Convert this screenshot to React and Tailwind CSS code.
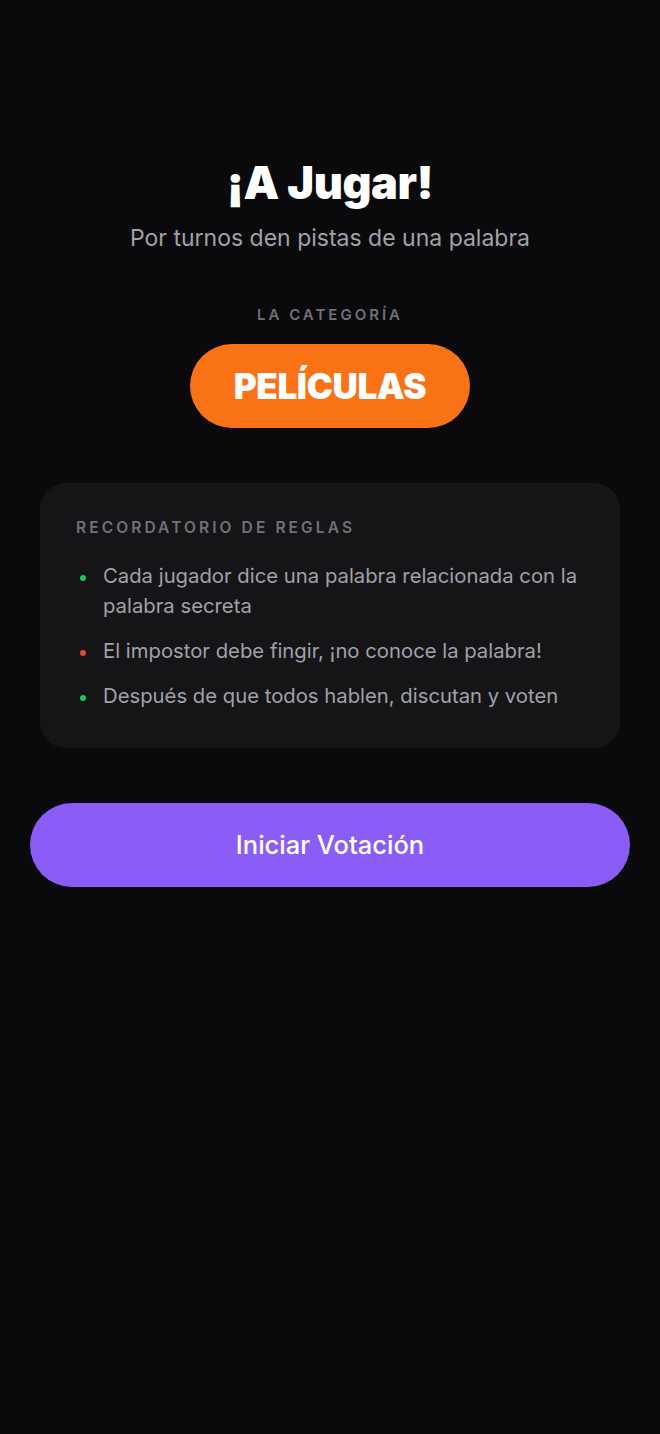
import React from "react";

const rules = [
  { text: "Cada jugador dice una palabra relacionada con la palabra secreta", color: "bg-[#22c55e]" },
  { text: "El impostor debe fingir, ¡no conoce la palabra!", color: "bg-[#ef4444]" },
  { text: "Después de que todos hablen, discutan y voten", color: "bg-[#22c55e]" },
];

const App = () => {
  return (
    <div
      className="min-h-[1434px] bg-[#0a0a0c] px-[30px] pt-[159px] flex flex-col items-center"
      style={{ fontFamily: "Inter, 'Noto Sans', sans-serif" }}
    >
      <h1 className="text-[45px] leading-[48px] font-black tracking-[-0.01em] text-white">
        ¡A Jugar!
      </h1>
      <p className="mt-[16px] text-[23px] leading-[30px] text-[#a1a1aa]">
        Por turnos den pistas de una palabra
      </p>

      <p className="mt-[52px] text-[15px] leading-[20px] font-semibold tracking-[0.2em] text-[#71717a]">
        LA CATEGORÍA
      </p>
      <div className="mt-[19px] w-[280px] h-[84px] rounded-[42px] bg-[#f97316] flex items-center justify-center">
        <span className="text-[35px] font-black tracking-[-0.01em] text-white">PELÍCULAS</span>
      </div>

      <div className="mt-[55px] w-[580px] rounded-[26px] bg-[#151517] px-[36px] pt-[35px] pb-[37px]">
        <p className="text-[15.5px] leading-[20px] font-semibold tracking-[0.2em] text-[#71717a]">
          RECORDATORIO DE REGLAS
        </p>
        <ul className="mt-[23px] flex flex-col gap-[15px]">
          {rules.map((r, i) => (
            <li key={i} className="flex items-start">
              <span className={`mt-[14px] ml-[4px] w-[6px] h-[6px] rounded-full shrink-0 ${r.color}`} />
              <span className="ml-[17px] text-[20.3px] leading-[30px] text-[#a1a1aa]">{r.text}</span>
            </li>
          ))}
        </ul>
      </div>

      <button className="mt-[55px] w-[600px] h-[84px] rounded-[42px] bg-[#8b5cf6] text-white text-[25.5px] font-medium">
        Iniciar Votación
      </button>
    </div>
  );
};

export default App;
